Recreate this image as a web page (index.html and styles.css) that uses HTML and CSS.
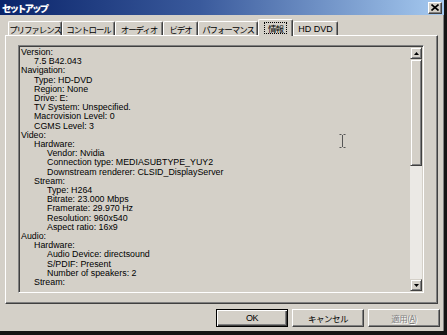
FILE: index.html
```html
<!DOCTYPE html>
<html lang="ja">
<head>
  <meta charset="UTF-8">
  <title>セットアップ</title>
  <link rel="stylesheet" href="styles.css">
</head>
<body>
  <div class="window">
    <div class="titlebar">
      <span class="title">セットアップ</span>
      <span class="close">
        <svg width="8" height="7" viewBox="0 0 8 7"><path d="M0.5 0.5L7.5 6.5M7.5 0.5L0.5 6.5" stroke="#000" stroke-width="1.6"/></svg>
      </span>
    </div>

    <div class="content">
      <div class="tabs">
        <div class="tab t-pref">プリファレンス</div>
        <div class="tab t-ctrl">コントロール</div>
        <div class="tab t-audio">オーディオ</div>
        <div class="tab t-video">ビデオ</div>
        <div class="tab t-perf">パフォーマンス</div>
        <div class="tab tab-active t-info"><span class="focus">情報</span></div>
        <div class="tab t-hd">HD DVD</div>
      </div>

      <div class="panel">
        <div class="infobox">
          <div class="infotext">
            <div class="l0">Version:</div>
            <div class="l1">7.5 B42.043</div>
            <div class="l0">Navigation:</div>
            <div class="l1">Type: HD-DVD</div>
            <div class="l1">Region: None</div>
            <div class="l1">Drive: E:</div>
            <div class="l1">TV System: Unspecified.</div>
            <div class="l1">Macrovision Level: 0</div>
            <div class="l1">CGMS Level: 3</div>
            <div class="l0">Video:</div>
            <div class="l1">Hardware:</div>
            <div class="l2">Vendor: Nvidia</div>
            <div class="l2">Connection type: MEDIASUBTYPE_YUY2</div>
            <div class="l2">Downstream renderer: CLSID_DisplayServer</div>
            <div class="l1">Stream:</div>
            <div class="l2">Type: H264</div>
            <div class="l2">Bitrate: 23.000 Mbps</div>
            <div class="l2">Framerate: 29.970 Hz</div>
            <div class="l2">Resolution: 960x540</div>
            <div class="l2">Aspect ratio: 16x9</div>
            <div class="l0">Audio:</div>
            <div class="l1">Hardware:</div>
            <div class="l2">Audio Device: directsound</div>
            <div class="l2">S/PDIF: Present</div>
            <div class="l2">Number of speakers: 2</div>
            <div class="l1">Stream:</div>
          </div>
          <div class="scrollbar">
            <div class="sb-btn">
              <svg width="5" height="3" viewBox="0 0 5 3"><path d="M2.5 0L5 3H0z" fill="#000"/></svg>
            </div>
            <div class="sb-track"><div class="sb-thumb"></div></div>
            <div class="sb-btn">
              <svg width="5" height="3" viewBox="0 0 5 3"><path d="M0 0H5L2.5 3z" fill="#000"/></svg>
            </div>
          </div>
          <svg class="ibeam" width="7" height="14" viewBox="0 0 7 14">
            <path d="M0.5 0.5H2.5M4.5 0.5H6.5M3.5 1V13M0.5 13.5H2.5M4.5 13.5H6.5" stroke="#555" stroke-width="1" fill="none"/>
          </svg>
        </div>
      </div>
    </div>

    <div class="buttons">
      <button class="btn btn-default">OK</button>
      <button class="btn">キャンセル</button>
      <button class="btn" disabled>適用(<u>A</u>)</button>
    </div>
  </div>
</body>
</html>
```

FILE: styles.css
```css
body {
  margin: 0;
  width: 447px;
  height: 335px;
  overflow: hidden;
  background: #141414;
  font-family: "Liberation Sans", "Noto Sans CJK JP", sans-serif;
}
.window {
  width: 444px;
  height: 331px;
  background: #d4d0c8;
  display: flex;
  flex-direction: column;
  box-shadow: inset -1px 0 #808080;
}
.titlebar {
  height: 15px;
  display: flex;
  align-items: center;
  justify-content: space-between;
  padding: 0 2px 0 2px;
  background: linear-gradient(to right, #0a246a, #3a5a9c 45%, #a6caf0);
}
.title {
  color: #fff;
  font-family: "Noto Sans CJK JP", sans-serif;
  font-weight: 900;
  font-size: 9.5px;
  letter-spacing: -2px;
}
.close {
  width: 12px;
  height: 10px;
  display: flex;
  align-items: center;
  justify-content: center;
  background: #d4d0c8;
  border: 1px solid;
  border-color: #fff #404040 #404040 #fff;
  box-shadow: inset -1px -1px #808080;
}
.content {
  flex: 1;
  display: flex;
  flex-direction: column;
  padding: 4px 6px 0 5px;
}
.tabs {
  height: 16px;
  display: flex;
  align-items: flex-end;
  padding-left: 3px;
  position: relative;
  z-index: 1;
}
.tab {
  height: 14px;
  box-sizing: border-box;
  display: flex;
  align-items: center;
  justify-content: center;
  white-space: nowrap;
  font-family: "Noto Sans CJK JP", sans-serif;
  font-size: 8.5px;
  letter-spacing: -1.1px;
  color: #000;
  border-top: 1px solid #fff;
  border-left: 1px solid #fff;
  border-right: 1px solid #404040;
  box-shadow: inset -1px 0 #808080;
  border-radius: 2px 2px 0 0;
}
.t-pref { width: 54px; }
.t-ctrl { width: 53px; }
.t-audio { width: 48px; }
.t-video { width: 35px; }
.t-perf { width: 60px; }
.t-info { width: 35px; }
.t-hd { width: 45px; font-family: "Liberation Sans", sans-serif; letter-spacing: 0; font-size: 9px; }
.tab-active {
  height: 17px;
  margin-bottom: -1px;
  background: #d4d0c8;
}
.focus {
  padding: 0 3px;
  outline: 1px dotted #000;
  line-height: 10px;
}
.panel {
  flex: 1;
  display: flex;
  border: 1px solid;
  border-color: #fff #404040 #404040 #fff;
  box-shadow: inset -1px -1px #808080;
  padding: 9px 13px 10px 12px;
}
.infobox {
  flex: 1;
  display: flex;
  position: relative;
  border: 1px solid;
  border-color: #808080 #fff #fff #808080;
  box-shadow: inset 1px 1px #404040, inset -1px -1px #d4d0c8;
  padding: 1px;
}
.infotext {
  flex: 1;
  padding: 1px 0 0 1px;
  font-size: 8.85px;
  line-height: 9.2px;
  color: #000;
  white-space: nowrap;
  overflow: hidden;
}
.l1 { padding-left: 13px; }
.l2 { padding-left: 26px; }
.scrollbar {
  width: 12px;
  display: flex;
  flex-direction: column;
}
.sb-btn {
  height: 12px;
  box-sizing: border-box;
  display: flex;
  align-items: center;
  justify-content: center;
  background: #d4d0c8;
  border: 1px solid;
  border-color: #d4d0c8 #404040 #404040 #d4d0c8;
  box-shadow: inset 1px 1px #fff, inset -1px -1px #808080;
}
.sb-track {
  flex: 1;
  background: #ebe9e5;
}
.sb-thumb {
  height: 107px;
  box-sizing: border-box;
  background: #d4d0c8;
  border: 1px solid;
  border-color: #d4d0c8 #404040 #404040 #d4d0c8;
  box-shadow: inset 1px 1px #fff, inset -1px -1px #808080;
}
.ibeam {
  position: absolute;
  left: 320px;
  top: 88px;
}
.buttons {
  height: 27px;
  display: flex;
  justify-content: flex-end;
  gap: 4px;
  padding: 5px 4px 0 0;
  box-sizing: border-box;
}
.btn {
  width: 72px;
  height: 18px;
  padding: 0;
  background: #d4d0c8;
  border: 1px solid;
  border-color: #fff #404040 #404040 #fff;
  box-shadow: inset -1px -1px #808080;
  font-family: "Noto Sans CJK JP", sans-serif;
  font-size: 8.5px;
  letter-spacing: -0.5px;
  color: #000;
}
.btn-default {
  border: 1px solid #000;
  box-shadow: inset 1px 1px #fff, inset -1px -1px #404040, inset -2px -2px #808080;
  font-family: "Liberation Sans", sans-serif;
  font-size: 9px;
}
.btn:disabled {
  color: #808080;
  text-shadow: 1px 1px #fff;
}
```
